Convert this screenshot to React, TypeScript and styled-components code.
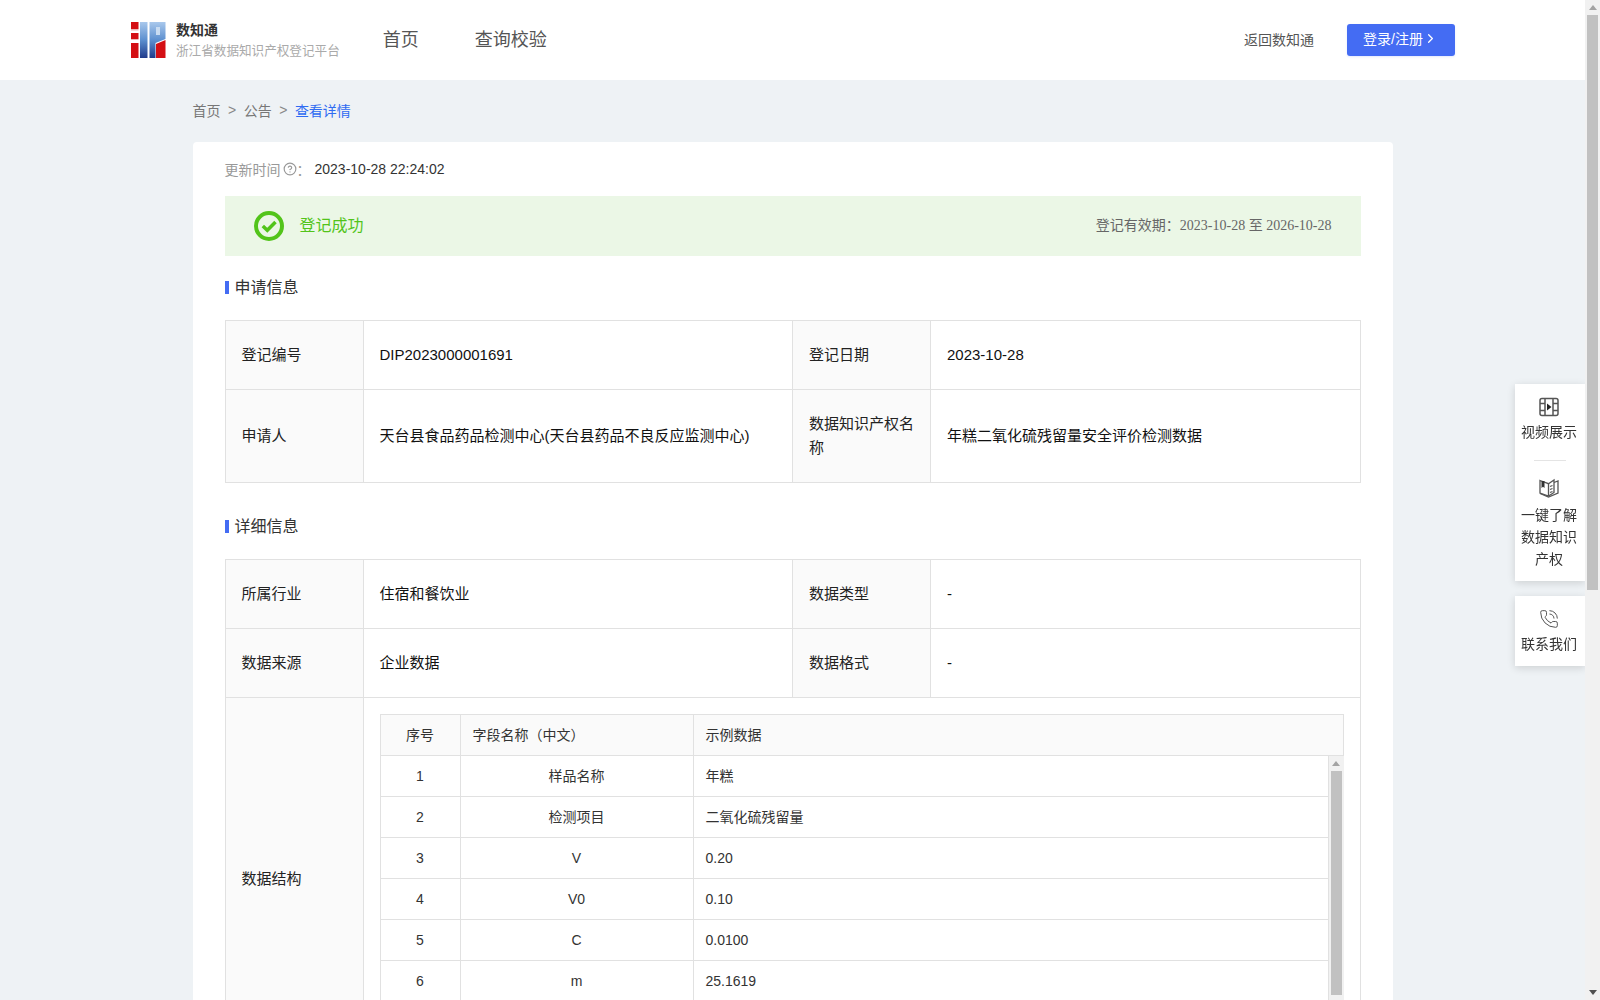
import { ChevronRight, CircleHelp, PhoneCall } from "lucide-react"
import styled, { createGlobalStyle } from "styled-components"

const GlobalStyle = createGlobalStyle`
  html, body {
    margin: 0;
    padding: 0;
  }
  body {
    background: #eef2f5;
    color: #333;
    font-family: "Liberation Sans", "Noto Sans CJK SC", sans-serif;
    font-size: 14px;
  }
`

const Page = styled.div`
  width: 1585px;
`

const Header = styled.header`
  height: 80px;
  background: #fff;
`

const HeaderInner = styled.div`
  display: flex;
  align-items: center;
  box-sizing: border-box;
  width: 1325px;
  height: 100%;
  margin: 0 auto;
  padding-left: 1px;
`

const Brand = styled.div`
  display: flex;
  align-items: center;
  gap: 10px;
`

const BrandText = styled.div`
  display: flex;
  flex-direction: column;
  gap: 2px;
`

const BrandName = styled.span`
  font-size: 14px;
  line-height: 20px;
  font-weight: 700;
  color: #333;
`

const BrandSub = styled.span`
  font-size: 12.6px;
  line-height: 18px;
  color: #aaa;
`

const Nav = styled.nav`
  display: flex;
  gap: 56px;
  margin-left: 43px;
  padding-bottom: 4px;
  font-size: 18px;
  color: #555;
`

const HeaderRight = styled.div`
  display: flex;
  align-items: center;
  gap: 33px;
  margin-left: auto;
  color: #555;
`

const BackLink = styled.span`
  padding-bottom: 2px;
`

const LoginButton = styled.button`
  display: flex;
  align-items: center;
  gap: 0;
  width: 108px;
  height: 32px;
  padding: 0 0 4px 16px;
  border: 0;
  border-radius: 3px;
  background: #446cf3;
  box-shadow: 0 1px 2px rgba(68, 108, 243, 0.15);
  color: #fff;
  font: inherit;
`

const Main = styled.main`
  width: 1200px;
  margin: 0 auto;
  padding-bottom: 65px;
`

const Breadcrumb = styled.div`
  display: flex;
  align-items: center;
  box-sizing: border-box;
  height: 62px;
  padding-bottom: 3px;
  color: #777;
`

const Crumb = styled.span<{ $current?: boolean }>`
  color: ${(p) => (p.$current ? "#2f6bf2" : "#777")};
`

const CrumbSep = styled.span`
  margin: 0 7.5px;
  color: #888;
`

const Card = styled.section`
  box-sizing: border-box;
  min-height: 1480px;
  padding: 16px 32px;
  border-radius: 4px;
  background: #fff;
`

const UpdateLine = styled.div`
  display: flex;
  align-items: center;
  height: 22px;
  padding-bottom: 1px;
  box-sizing: border-box;
  color: #999;
`

const HelpIcon = styled(CircleHelp)`
  width: 14px;
  height: 14px;
  margin-left: 2px;
  color: #999;
`

const UpdateValue = styled.span`
  margin-left: 4px;
  color: #333;
`

const Banner = styled.div`
  display: flex;
  align-items: center;
  box-sizing: border-box;
  height: 60px;
  margin-top: 16px;
  padding: 0 29px 1px 29px;
  background: #ebf7e6;
`

const BannerTitle = styled.span`
  margin-left: 16px;
  padding-bottom: 3px;
  font-size: 16px;
  color: #52c41a;
`

const BannerRange = styled.span`
  margin-left: auto;
  padding-bottom: 3px;
  color: #666;
`

const BannerDate = styled.span`
  font-family: "Liberation Serif", "Noto Sans CJK SC", serif;
  font-size: 14px;
`

const SectionTitle = styled.h3<{ $top: number }>`
  display: flex;
  align-items: center;
  gap: 6px;
  height: 24px;
  margin: ${(p) => p.$top}px 0 21px;
  font-size: 16px;
  font-weight: 400;
  color: #333;
  span {
    padding-bottom: 2px;
  }
  &::before {
    content: "";
    width: 4px;
    height: 13px;
    background: #446cf3;
  }
`

const InfoTable = styled.table`
  width: 1136px;
  border-collapse: collapse;
  table-layout: fixed;
`

const LabelCell = styled.td`
  width: 105px;
  padding: 22px 16px;
  border: 1px solid #e1e1e1;
  background: #fafafa;
  font-size: 15px;
  line-height: 24px;
  color: #222;
`

const ValueCell = styled.td`
  padding: 22px 16px;
  border: 1px solid #e1e1e1;
  font-size: 15px;
  line-height: 24px;
  color: #111;
`

const StructureCell = styled(ValueCell)`
  padding: 16px;
  font-size: 14px;
`

const Fields = styled.div`
  width: 964px;
`

const FieldRow = styled.div<{ $head?: boolean }>`
  display: grid;
  grid-template-columns: 79px 233px 1fr;
  box-sizing: border-box;
  height: ${(p) => (p.$head ? "42px" : "41px")};
  border: 1px solid #e1e1e1;
  border-width: ${(p) => (p.$head ? "1px" : "0 1px 1px 1px")};
  background: ${(p) => (p.$head ? "#fafafa" : "#fff")};
  color: #333;
`

const FieldCell = styled.div<{ $align?: string }>`
  display: flex;
  align-items: center;
  justify-content: ${(p) => p.$align || "flex-start"};
  padding: 0 12px;
  & + & {
    border-left: 1px solid #e1e1e1;
  }
`

const FieldsBody = styled.div`
  display: flex;
  height: 287px;
  overflow: hidden;
`

const FieldRows = styled.div`
  flex: 1;
`

const Track = styled.div`
  display: flex;
  flex-direction: column;
  align-items: center;
  flex: none;
  box-sizing: border-box;
  width: 15px;
  background: #f1f1f1;
`

const Arrow = styled.div<{ $dark?: boolean }>`
  flex: none;
  width: 0;
  height: 0;
  margin: 5px 0;
  border-left: 4px solid transparent;
  border-right: 4px solid transparent;
  border-bottom: 5px solid ${(p) => (p.$dark ? "#505050" : "#a3a3a3")};
`

const ArrowDown = styled(Arrow)`
  transform: rotate(180deg);
`

const Thumb = styled.div<{ $height: number }>`
  flex: none;
  width: 11px;
  height: ${(p) => p.$height}px;
  background: #c1c1c1;
`

const TrackGap = styled.div`
  flex: 1;
`

const PageScrollbar = styled(Track)`
  position: fixed;
  top: 0;
  right: 0;
  bottom: 0;
`

const SidePanel = styled.aside`
  position: fixed;
  top: 384px;
  right: 15px;
  display: flex;
  flex-direction: column;
  gap: 15px;
  width: 70px;
`

const SideCard = styled.div`
  background: #fff;
  box-shadow: 0 2px 8px rgba(0, 0, 0, 0.14);
  padding-bottom: 11px;
`

const SideItem = styled.div<{ $top: number }>`
  display: flex;
  flex-direction: column;
  align-items: center;
  padding: ${(p) => p.$top}px 8px 0 6px;
  color: #333;
  line-height: 22px;
  text-align: center;
`

const SideIconWrap = styled.div<{ $gap: number }>`
  display: flex;
  height: 20px;
  margin-bottom: ${(p) => p.$gap}px;
  color: #555;
`

const SideDivider = styled.div`
  width: 32px;
  height: 1px;
  margin: 17px auto 0;
  background: #e4e4e4;
`

const LogoMark = () => (
  <svg width="35" height="36" viewBox="0 0 35 36">
    <defs>
      <linearGradient id="logoBlue" x1="0" y1="0" x2="0" y2="1">
        <stop offset="0" stopColor="#a9c8ec" />
        <stop offset="0.5" stopColor="#5c8fcf" />
        <stop offset="1" stopColor="#1f3a8a" />
      </linearGradient>
    </defs>
    <path d="M0 0h7.5v7H0zM0 11h7.5v6H0zM0 21h7.5v15H0z" fill="#d40f14" />
    <path d="M0 7h7.5v1.5H0zM0 17h7.5v1H0z" fill="#eeb6b8" />
    <path d="M9 0h7.5v36H9z" fill="url(#logoBlue)" />
    <path d="M18.500 0h16v17l-10 4v15h-6z" fill="url(#logoBlue)" />
    <path d="M25 5h4v8h-4z" fill="#c9dcf2" />
    <path d="M25 22l9.500-4v18H25z" fill="#d40f14" />
  </svg>
)

const SuccessIcon = () => (
  <svg width="30" height="30" viewBox="0 0 30 30" fill="none">
    <circle cx="15" cy="15" r="13" stroke="#52c41a" strokeWidth="4" />
    <path d="M8.800 15l4.500 4.200L21.500 11" stroke="#52c41a" strokeWidth="3.500" />
  </svg>
)

const VideoIcon = () => (
  <svg width="20" height="20" viewBox="0 0 20 20" fill="none" stroke="currentColor" strokeWidth="1.500">
    <rect x="1" y="1.500" width="18" height="17" rx="2" />
    <path d="M6 1.500v17M14 1.500v17M1 6.500h5M1 13.500h5M14 6.500h5M14 13.500h5" />
    <path d="M8 6.500l4.500 3.500L8 13.500z" fill="#222" stroke="none" />
  </svg>
)

const BookIcon = () => (
  <svg width="20" height="20" viewBox="0 0 20 20" fill="none" stroke="currentColor" strokeWidth="1.300">
    <path d="M1 2.500l8.500 3.200L15 2v12.500l-5.500 3.500L1 15z" />
    <path d="M15 4.500l4-1.500V15l-9.500 4L1 15.500" />
    <path d="M9.500 5.700V18" />
    <path d="M11 8.500l2.500-1M11 11.500l2.500-1M11 14.500l2.500-1" />
    <path d="M2.500 3h3v7L4 8.800 2.500 10z" fill="#333" stroke="none" />
  </svg>
)

const fields = [
  { no: "1", name: "样品名称", sample: "年糕" },
  { no: "2", name: "检测项目", sample: "二氧化硫残留量" },
  { no: "3", name: "V", sample: "0.20" },
  { no: "4", name: "V0", sample: "0.10" },
  { no: "5", name: "C", sample: "0.0100" },
  { no: "6", name: "m", sample: "25.1619" },
]

export default function App() {
  return (
    <Page>
      <GlobalStyle />
      <Header>
        <HeaderInner>
          <Brand>
            <LogoMark />
            <BrandText>
              <BrandName>数知通</BrandName>
              <BrandSub>浙江省数据知识产权登记平台</BrandSub>
            </BrandText>
          </Brand>
          <Nav>
            <span>首页</span>
            <span>查询校验</span>
          </Nav>
          <HeaderRight>
            <BackLink>返回数知通</BackLink>
            <LoginButton>
              登录/注册
              <ChevronRight size={15} />
            </LoginButton>
          </HeaderRight>
        </HeaderInner>
      </Header>

      <Main>
        <Breadcrumb>
          <Crumb>首页</Crumb>
          <CrumbSep>&gt;</CrumbSep>
          <Crumb>公告</Crumb>
          <CrumbSep>&gt;</CrumbSep>
          <Crumb $current>查看详情</Crumb>
        </Breadcrumb>

        <Card>
          <UpdateLine>
            更新时间
            <HelpIcon />
            ：<UpdateValue>2023-10-28 22:24:02</UpdateValue>
          </UpdateLine>

          <Banner>
            <SuccessIcon />
            <BannerTitle>登记成功</BannerTitle>
            <BannerRange>
              登记有效期：<BannerDate>2023-10-28 至 2026-10-28</BannerDate>
            </BannerRange>
          </Banner>

          <SectionTitle $top={19}><span>申请信息</span></SectionTitle>
          <InfoTable>
            <tbody>
              <tr>
                <LabelCell>登记编号</LabelCell>
                <ValueCell>DIP2023000001691</ValueCell>
                <LabelCell>登记日期</LabelCell>
                <ValueCell>2023-10-28</ValueCell>
              </tr>
              <tr>
                <LabelCell>申请人</LabelCell>
                <ValueCell>天台县食品药品检测中心(天台县药品不良反应监测中心)</ValueCell>
                <LabelCell>数据知识产权名称</LabelCell>
                <ValueCell>年糕二氧化硫残留量安全评价检测数据</ValueCell>
              </tr>
            </tbody>
          </InfoTable>

          <SectionTitle $top={31}><span>详细信息</span></SectionTitle>
          <InfoTable>
            <tbody>
              <tr>
                <LabelCell>所属行业</LabelCell>
                <ValueCell>住宿和餐饮业</ValueCell>
                <LabelCell>数据类型</LabelCell>
                <ValueCell>-</ValueCell>
              </tr>
              <tr>
                <LabelCell>数据来源</LabelCell>
                <ValueCell>企业数据</ValueCell>
                <LabelCell>数据格式</LabelCell>
                <ValueCell>-</ValueCell>
              </tr>
              <tr>
                <LabelCell>数据结构</LabelCell>
                <StructureCell colSpan={3}>
                  <Fields>
                    <FieldRow $head>
                      <FieldCell $align="center">序号</FieldCell>
                      <FieldCell>字段名称（中文）</FieldCell>
                      <FieldCell>示例数据</FieldCell>
                    </FieldRow>
                    <FieldsBody>
                      <FieldRows>
                        {fields.map((f) => (
                          <FieldRow key={f.no}>
                            <FieldCell $align="center">{f.no}</FieldCell>
                            <FieldCell $align="center">{f.name}</FieldCell>
                            <FieldCell>{f.sample}</FieldCell>
                          </FieldRow>
                        ))}
                      </FieldRows>
                      <Track>
                        <Arrow />
                        <Thumb $height={224} />
                      </Track>
                    </FieldsBody>
                  </Fields>
                </StructureCell>
              </tr>
            </tbody>
          </InfoTable>
        </Card>
      </Main>

      <SidePanel>
        <SideCard>
          <SideItem $top={13}>
            <SideIconWrap $gap={4}>
              <VideoIcon />
            </SideIconWrap>
            视频展示
          </SideItem>
          <SideDivider />
          <SideItem $top={17}>
            <SideIconWrap $gap={6}>
              <BookIcon />
            </SideIconWrap>
            一键了解数据知识产权
          </SideItem>
        </SideCard>
        <SideCard>
          <SideItem $top={13}>
            <SideIconWrap $gap={4}>
              <PhoneCall size={20} strokeWidth={1.2} />
            </SideIconWrap>
            联系我们
          </SideItem>
        </SideCard>
      </SidePanel>

      <PageScrollbar>
        <Arrow />
        <Thumb $height={575} />
        <TrackGap />
        <ArrowDown $dark />
      </PageScrollbar>
    </Page>
  )
}
